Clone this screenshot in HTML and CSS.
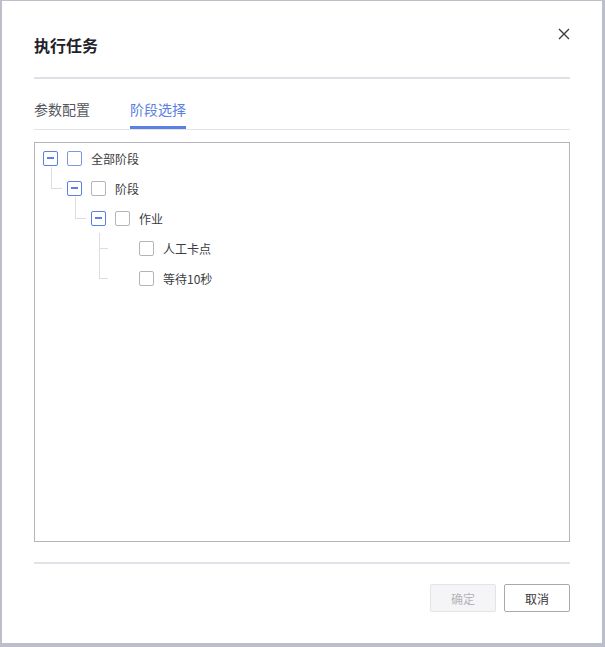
FILE: index.html
```html
<!DOCTYPE html>
<html>

<head>
    <meta charset="UTF-8">
    <title>执行任务</title>
    <link rel="stylesheet" href="styles.css">
</head>

<body>
    <!-- 弹窗 -->
    <div class="dialog">
        <div class="dialog-header">
            <h2 class="dialog-title">执行任务</h2>
            <a class="dialog-close" href="javascript:;">
                <svg width="12" height="12" viewBox="0 0 12 12">
                    <path d="M1 1L11 11M11 1L1 11" stroke="#3a3d45" stroke-width="1.4" fill="none" />
                </svg>
            </a>
        </div>

        <!-- 标签页 -->
        <div class="tabs">
            <a class="tab" href="javascript:;">参数配置</a>
            <a class="tab tab-active" href="javascript:;">阶段选择</a>
        </div>

        <!-- 树 -->
        <div class="tree">
            <div class="tree-row">
                <span class="toggle"></span>
                <span class="check check-hover"></span>
                <span class="label">全部阶段</span>
            </div>
            <div class="tree-row level-1">
                <span class="elbow"></span>
                <span class="toggle"></span>
                <span class="check"></span>
                <span class="label">阶段</span>
            </div>
            <div class="tree-row level-2">
                <span class="elbow"></span>
                <span class="toggle"></span>
                <span class="check"></span>
                <span class="label">作业</span>
            </div>
            <div class="tree-row level-3">
                <span class="elbow elbow-leaf"></span>
                <span class="check"></span>
                <span class="label">人工卡点</span>
            </div>
            <div class="tree-row level-3">
                <span class="elbow elbow-next"></span>
                <span class="check"></span>
                <span class="label">等待10秒</span>
            </div>
        </div>

        <!-- 底部按钮 -->
        <div class="dialog-footer">
            <button class="btn btn-disabled">确定</button>
            <button class="btn">取消</button>
        </div>
    </div>
</body>

</html>
```

FILE: styles.css
```css
* {
    margin: 0;
    padding: 0;
    box-sizing: border-box;
}

body {
    background-color: #bcbfc9;
    font-family: "Noto Sans CJK SC", "Noto Sans", sans-serif;
    color: #33353b;
}

/* 弹窗 */
.dialog {
    width: 600px;
    height: 642px;
    margin: 1px 0 0 2px;
    background-color: #fff;
    padding: 0 32px;
    display: flex;
    flex-direction: column;
}

.dialog-header {
    display: flex;
    justify-content: space-between;
    padding: 32px 0 20px;
    border-bottom: 2px solid #dfe0e5;
}

.dialog-title {
    font-size: 16px;
    line-height: 24px;
    font-weight: 600;
    color: #1f2228;
}

.dialog-close {
    display: block;
    width: 12px;
    height: 12px;
    margin-top: -5px;
}

.dialog-close svg {
    display: block;
}

/* 标签页 */
.tabs {
    display: flex;
    gap: 40px;
    border-bottom: 1px solid #e2e3e8;
}

.tab {
    font-size: 14px;
    line-height: 20px;
    padding: 20px 0 7px;
    color: #55575e;
    text-decoration: none;
    border-bottom: 3px solid transparent;
}

.tab-active {
    color: #5b7fe2;
    border-bottom-color: #5b7fe2;
}

/* 树 */
.tree {
    margin-top: 12px;
    height: 400px;
    border: 1px solid #b3b4bc;
    padding: 0 0 0 8px;
}

.tree-row {
    height: 30px;
    display: flex;
    align-items: center;
    font-size: 12px;
}

.level-2 {
    padding-left: 24px;
}

.level-3 {
    padding-left: 48px;
}

.toggle {
    width: 15px;
    height: 15px;
    border: 1px solid #5b7fe2;
    border-radius: 2px;
    display: flex;
    align-items: center;
    justify-content: center;
    margin-right: 9px;
}

.toggle::after {
    content: "";
    width: 7px;
    height: 2px;
    background-color: #5b7fe2;
}

.check {
    width: 15px;
    height: 15px;
    border: 1px solid #b4b5bb;
    border-radius: 2px;
    margin-right: 9px;
}

.check-hover {
    border-color: #7d97e6;
}

.label {
    color: #3a3c42;
}

/* 连接线 */
.elbow {
    align-self: flex-start;
    width: 11px;
    height: 22px;
    margin: -6px 5px 0 8px;
    border-left: 1px solid #dcdde1;
    border-bottom: 1px solid #dcdde1;
}

.elbow-leaf {
    width: 9px;
    height: 16px;
    margin-top: 0;
    margin-right: 31px;
}

.elbow-next {
    width: 9px;
    height: 30px;
    margin-top: -14px;
    margin-right: 31px;
}

/* 底部 */
.dialog-footer {
    margin-top: 20px;
    border-top: 2px solid #e2e3e8;
    padding-top: 20px;
    display: flex;
    justify-content: flex-end;
    gap: 8px;
}

.btn {
    width: 66px;
    height: 28px;
    font-family: inherit;
    font-size: 12px;
    color: #33353b;
    background-color: #fff;
    border: 1px solid #a9aab1;
    border-radius: 2px;
}

.btn-disabled {
    color: #b3b4b9;
    background-color: #f5f5f7;
    border-color: #e3e4e8;
}
```
